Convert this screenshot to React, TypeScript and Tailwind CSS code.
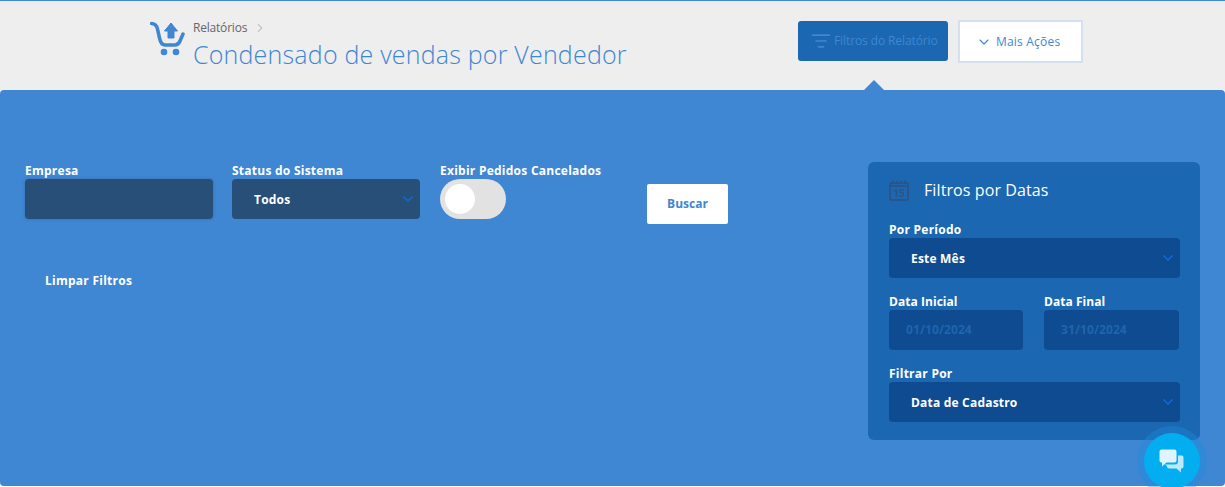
import { ChevronDown, ChevronRight, ListFilter } from 'lucide-react'

const font = { fontFamily: '"Open Sans", sans-serif' }

function Field({ label, value, className }: { label: string; value: string; className: string }) {
  return (
    <div className="flex flex-col">
      <label className="h-[17px] text-[12px] leading-[17px] font-bold tracking-[0.25px] text-white whitespace-nowrap">{label}</label>
      <div className={`flex h-10 items-center justify-between rounded-[4px] pl-[22px] pr-[4px] ${className}`}>
        <span className="mt-[1px] text-[12px] font-bold tracking-[0.2px] text-white">{value}</span>
        <ChevronDown className="h-4 w-4 text-[#0f68d8]" strokeWidth={2.5} />
      </div>
    </div>
  )
}

function DateField({ label, value, width }: { label: string; value: string; width: string }) {
  return (
    <div className={`flex flex-col ${width}`}>
      <label className="h-[17px] text-[12px] leading-[17px] font-bold tracking-[0.05px] text-white whitespace-nowrap">{label}</label>
      <div className="flex h-10 items-center rounded-[4px] bg-[#0f4b91] pl-[17px]">
        <span className="text-[12px] font-bold tracking-[0.1px] text-[#1f65ad]">{value}</span>
      </div>
    </div>
  )
}

export default function App() {
  return (
    <div style={font} className="relative h-[487px] w-[1225px] overflow-hidden bg-white">
      <header className="flex h-[90px] border-t border-[#3f86d3] bg-[#eeeeee]">
        <div className="ml-[150px] mt-[20px] flex w-[648px]">
          <svg width="36" height="36" viewBox="0 0 36 36" className="shrink-0">
            <path d="M1.5 2.5C5 2.5 6.5 4 7.5 8L9.5 17C10.5 22 12 24 15 24H25C28 24 29 22.5 30 20L33 13" fill="none" stroke="#3f86d3" strokeWidth="3.5" strokeLinecap="round" />
            <path d="M21 2L27.5 10H24V17H18V10H14.5Z" fill="#3f86d3" stroke="#3f86d3" strokeWidth="1" strokeLinejoin="round" />
            <circle cx="14" cy="31" r="3.3" fill="#3f86d3" />
            <circle cx="26" cy="31" r="3.3" fill="#3f86d3" />
          </svg>
          <div className="ml-[7px] flex flex-col">
            <div className="flex h-[14px] items-center text-[12px] leading-[14px] tracking-[-0.2px] text-[#666666]">
              <span>Relatórios</span>
              <ChevronRight className="ml-[6px] h-[14px] w-[14px] text-[#c4c4c4]" strokeWidth={2} />
            </div>
            <h1 className="mt-[2px] text-[25px] leading-[34px] font-light tracking-[0.2px] text-[#3f86d3] whitespace-nowrap">Condensado de vendas por Vendedor</h1>
          </div>
        </div>
        <div className="relative mt-[20px] flex h-10 w-[150px] items-center rounded-[3px] bg-[#1b67b2] pl-[13px] text-[#3f86d3]">
          <ListFilter className="h-5 w-5" strokeWidth={2} />
          <span className="ml-[3px] text-[12px] tracking-[-0.1px]">Filtros do Relatório</span>
          <div className="absolute left-[66px] top-[59px] h-0 w-0 border-x-[10px] border-b-[10px] border-x-transparent border-b-[#3f86d3]" />
        </div>
        <div className="ml-[10px] mt-[19px] flex h-[43px] w-[125px] items-center border-2 border-[#d5e0ee] bg-white pl-[16px] text-[#3f86d3]">
          <ChevronDown className="h-4 w-4" strokeWidth={1.6} />
          <span className="ml-[4px] text-[12px] tracking-[0.2px]">Mais Ações</span>
        </div>
      </header>

      <main className="flex h-[396px] justify-between rounded-[4px] bg-[#3f86d3] pl-[25px] pr-[25px] pt-[72px]">
        <div className="flex flex-col">
          <div className="flex items-start">
            <div className="w-[188px]">
              <Field label="Empresa" value="" className="bg-[#284f78] shadow-[0_0_3px_rgba(20,50,90,0.3)] [&>svg]:hidden" />
            </div>
            <div className="ml-[19px] w-[188px]">
              <Field label="Status do Sistema" value="Todos" className="bg-[#284f78]" />
            </div>
            <div className="ml-[20px] w-[207px]">
              <label className="block h-[17px] text-[12px] leading-[17px] font-bold tracking-[0.25px] text-white whitespace-nowrap">Exibir Pedidos Cancelados</label>
              <div className="flex h-10 w-[66px] items-center rounded-full bg-[#e2e2e2] pl-[5px]">
                <div className="h-[30px] w-[30px] rounded-full bg-white" />
              </div>
            </div>
            <button className="mt-[22px] h-10 w-[81px] rounded-[2px] bg-white text-[12px] font-bold text-[#3f86d3]">Buscar</button>
          </div>
          <button className="ml-[20px] mt-[48px] self-start text-[12px] leading-[17px] font-bold tracking-[0.25px] text-white">Limpar Filtros</button>
        </div>

        <aside className="h-[278px] w-[332px] rounded-[6px] bg-[#1b67b2] pl-[21px] pr-[20px] pt-[16px]">
          <div className="flex h-[24px] items-center gap-[15px]">
            <svg width="20" height="21" viewBox="0 0 20 21" className="shrink-0 text-[#2b5488]">
              <rect x="1" y="3" width="18" height="17" rx="2" fill="none" stroke="currentColor" strokeWidth="2" />
              <path d="M1 6h18" stroke="currentColor" strokeWidth="2" />
              <path d="M4 0.5v3M8 0.5v3M12 0.5v3M16 0.5v3" stroke="currentColor" strokeWidth="1.5" />
              <text x="10" y="17" textAnchor="middle" fontSize="10" fontWeight="700" fill="currentColor">15</text>
            </svg>
            <h2 className="text-[16px] tracking-[0.1px] text-white">Filtros por Datas</h2>
          </div>
          <div className="mt-[19px]">
            <Field label="Por Período" value="Este Mês" className="bg-[#0f4b91]" />
          </div>
          <div className="mt-[15px] flex gap-[21px]">
            <DateField label="Data Inicial" value="01/10/2024" width="w-[134px]" />
            <DateField label="Data Final" value="31/10/2024" width="w-[135px]" />
          </div>
          <div className="mt-[15px]">
            <Field label="Filtrar Por" value="Data de Cadastro" className="bg-[#0f4b91]" />
          </div>
        </aside>
      </main>

      <button className="absolute left-[1144px] top-[433px] flex h-[56px] w-[56px] items-center justify-center rounded-full bg-[#03aef0] shadow-[0_0_0_7px_rgba(30,140,220,0.4)]">
        <svg width="26" height="26" viewBox="0 0 26 26">
          <path d="M6 16.5H16a3 3 0 0 0 3-3V7.5H22.5a2 2 0 0 1 2 2V18.5a2 2 0 0 1-2 2H22V24.5L17.5 20.5H10a2 2 0 0 1-2-2V18Z" fill="#bfe9fb" />
          <path d="M2.5 1.5H15.5a2 2 0 0 1 2 2V12.5a2 2 0 0 1-2 2H7.5L3 18.5V14.5H2.5a2 2 0 0 1-2-2V3.5a2 2 0 0 1 2-2Z" fill="#dff4ff" />
        </svg>
      </button>
    </div>
  )
}
